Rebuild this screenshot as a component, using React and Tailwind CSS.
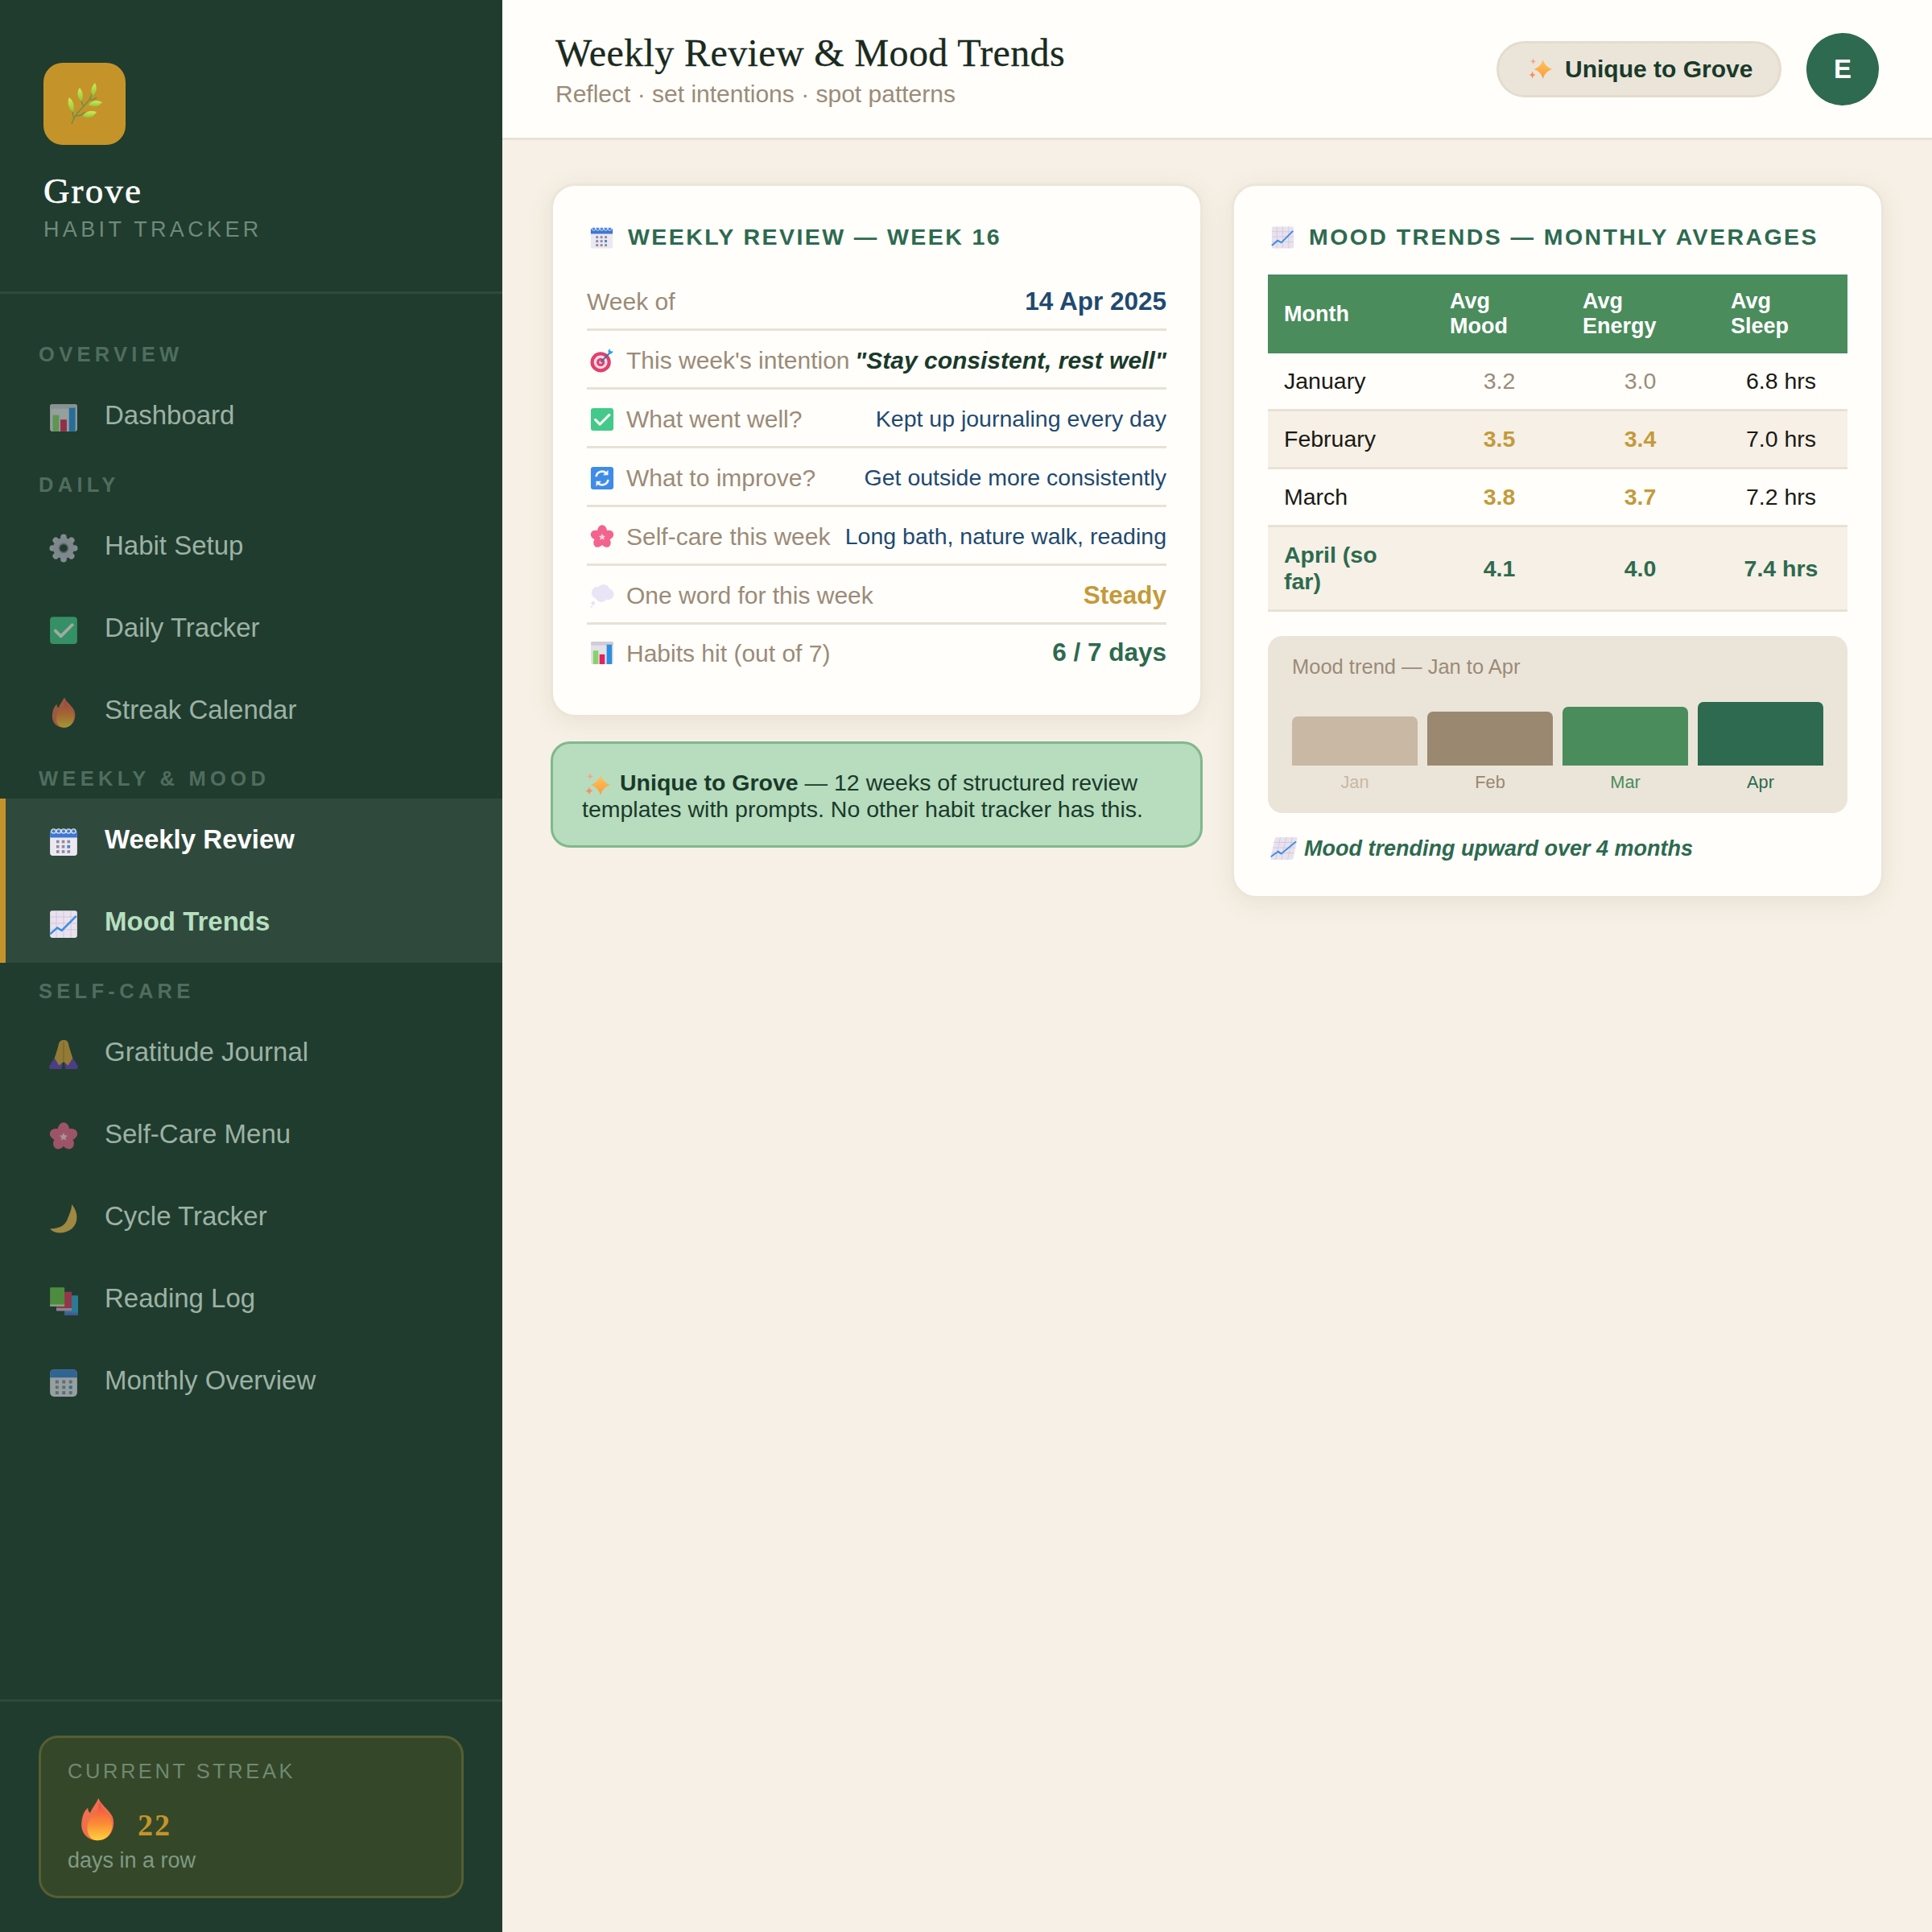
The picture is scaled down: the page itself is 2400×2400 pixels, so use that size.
import * as React from "react";

// Emoji drawings, the machine has no colour emoji font
const BarsIcon = ({ className }) => (
  <svg viewBox="0 0 32 32" className={className}>
    <rect x="1" y="1" width="30" height="30" rx="2.5" fill="#e4e2e8" />
    <rect x="1" y="1" width="30" height="5" rx="2" fill="#cfccd6" />
    <rect x="4" y="13" width="7" height="18" fill="#86d36b" />
    <rect x="12.5" y="18" width="7" height="13" fill="#e0245e" />
    <rect x="22" y="5" width="7" height="26" fill="#2a8fe0" />
  </svg>
);
const GearIcon = ({ className }) => (
  <svg viewBox="0 0 32 32" className={className}>
    {[0, 45, 90, 135, 180, 225, 270, 315].map((a) => (
      <circle key={a} cx="16" cy="3.8" r="3.4" fill="#c3c0cf" transform={`rotate(${a} 16 16)`} />
    ))}
    <circle cx="16" cy="16" r="8" fill="none" stroke="#bdb9ca" strokeWidth="7" />
    <circle cx="16" cy="16" r="5" fill="none" stroke="#8b8799" strokeWidth="1.4" />
  </svg>
);
const CheckIcon = ({ className }) => (
  <svg viewBox="0 0 32 32" className={className}>
    <rect x="1" y="1" width="30" height="30" rx="3.5" fill="#43c98a" />
    <path d="M7 16.5l6 6L25.5 10" fill="none" stroke="#f4f6f2" strokeWidth="3.4" strokeLinecap="round" strokeLinejoin="round" />
  </svg>
);
const FlameIcon = ({ className, id = "flame" }) => (
  <svg viewBox="0 0 32 40" className={className}>
    <defs>
      <linearGradient id={id} x1="0" y1="0" x2="0" y2="1">
        <stop offset="0" stopColor="#f0484a" />
        <stop offset="0.55" stopColor="#fb8a35" />
        <stop offset="1" stopColor="#fdd23c" />
      </linearGradient>
    </defs>
    <path d="M17 0c2 6 9 10 13 17 4 9-1 23-14 23C5 40 0 31 1 23 2 16 3 13 7 9c0 3 1 4 2 5 2-5 6-9 8-14z" fill="#ef6f4e" />
    <path d="M18 4c2 6 8 10 11 17 3 9-2 19-13 19C8 40 5 31 7 24c1-5 4-8 6-11 1 2 1 3 2 4 1-5 2-9 3-13z" fill={`url(#${id})`} />
  </svg>
);
const SpiralCalIcon = ({ className }) => (
  <svg viewBox="0 0 32 32" className={className}>
    <rect x="1" y="3" width="30" height="28" rx="3" fill="#ece8f2" />
    <path d="M1 6a3 3 0 0 1 3-3h24a3 3 0 0 1 3 3v5H1z" fill="#3f76d1" />
    {[5, 10.5, 16, 21.5, 27].map((x) => (
      <circle key={x} cx={x} cy="4" r="2.4" fill="none" stroke="#d6e6f8" strokeWidth="1.1" />
    ))}
    {[8, 14, 20].map((x) =>
      [14, 19.5, 25].map((y) => <rect key={`${x}-${y}`} x={x} y={y} width="3.2" height="3.2" fill="#8d8a9c" />)
    )}
    <rect x="20" y="19.5" width="3.2" height="3.2" fill="#3f8ad1" />
  </svg>
);
const TrendIcon = ({ className }) => (
  <svg viewBox="0 0 32 32" className={className}>
    <rect x="1" y="1" width="30" height="30" rx="2.5" fill="#e9e2ee" />
    <path d="M1 8h30M1 15h30M1 22h30M8 1v30M16 1v30M24 1v30" stroke="#cdc4d8" strokeWidth="0.8" />
    <path d="M1 27l8-7 5 3L30 7" fill="none" stroke="#3b8ee0" strokeWidth="2.2" />
  </svg>
);
const PrayIcon = ({ className }) => (
  <svg viewBox="0 0 32 32" className={className}>
    <path d="M7 18L0 29l1 3h13l1-6zM25 18l7 11-1 3H18l-1-6z" fill="#6a3fc0" />
    <path d="M16 0c-4 0-5.500 3-6 7L6 20l5 8 5-4 5 4 5-8-4-13c-.5-4-2-7-5-7z" fill="#e0a63a" />
    <path d="M16 2v21" stroke="#b07e22" strokeWidth="1" />
  </svg>
);
const BlossomIcon = ({ className }) => (
  <svg viewBox="0 0 32 32" className={className}>
    {[0, 72, 144, 216, 288].map((a) => (
      <ellipse key={a} cx="16" cy="8.5" rx="6.4" ry="8.2" fill="#f2648d" transform={`rotate(${a} 16 16)`} />
    ))}
    <path d="M16 11.5l1.3 3 3.2.3-2.4 2.1.7 3.2-2.8-1.700-2.8 1.700.7-3.200-2.400-2.100 3.200-.3z" fill="#fbd5df" />
  </svg>
);
const MoonIcon = ({ className }) => (
  <svg viewBox="0 0 32 32" className={className}>
    <path d="M25 0c7 8 8 20 0 27C17 33 6 33 1 27c9 0 16-3 19-10 3-7 5-12 5-17z" fill="#f0bd4f" />
  </svg>
);
const BooksIcon = ({ className }) => (
  <svg viewBox="0 0 32 32" className={className}>
    <rect x="17" y="10" width="15" height="22" rx="1" fill="#2fa5dc" />
    <path d="M17 29h15v3H17z" fill="#5b6fd6" />
    <rect x="8" y="6" width="17" height="21" rx="1" fill="#e0335e" />
    <path d="M8 24h17v3H8z" fill="#c9b6d8" />
    <rect x="1" y="1" width="16" height="21" rx="1" fill="#6cc24a" />
    <path d="M1 20h16v2H1z" fill="#d5e8c6" />
  </svg>
);
const MonthIcon = ({ className }) => (
  <svg viewBox="0 0 32 32" className={className}>
    <rect x="1" y="1" width="30" height="30" rx="4.5" fill="#e6e3ee" />
    <path d="M1 10V5.5A4.5 4.5 0 0 1 5.500 1h21A4.500 4.500 0 0 1 31 5.500V10z" fill="#3b7fd6" />
    {[7, 14.5, 22].map((x) =>
      [13, 19, 25].map((y) => <rect key={`${x}-${y}`} x={x} y={y} width="3.500" height="3.500" fill={x === 22 && y === 19 ? "#3b8ee0" : "#8f8ca0"} />)
    )}
  </svg>
);
const TargetIcon = ({ className }) => (
  <svg viewBox="0 0 32 32" className={className}>
    <circle cx="14" cy="18" r="13.500" fill="#e0406f" />
    <circle cx="14" cy="18" r="9" fill="#f6dbe4" />
    <circle cx="14" cy="18" r="5.500" fill="#e0406f" />
    <circle cx="14" cy="18" r="2" fill="#f6dbe4" />
    <path d="M14 18L28 4" stroke="#3c6fa8" strokeWidth="2" />
    <path d="M24 3l2-3 1 3.500 4 .5-3 3-3.500.5z" fill="#2f9fe6" />
  </svg>
);
const RepeatIcon = ({ className }) => (
  <svg viewBox="0 0 32 32" className={className}>
    <rect x="1" y="1" width="30" height="30" rx="3.500" fill="#3f8be8" />
    <path d="M8 14a8 8 0 0 1 14-4M24 18a8 8 0 0 1-14 4" fill="none" stroke="#f2f6fc" strokeWidth="2.800" />
    <path d="M24 5v7h-7zM8 27v-7h7z" fill="#f2f6fc" />
  </svg>
);
const ThoughtIcon = ({ className }) => (
  <svg viewBox="0 0 32 32" className={className}>
    <g fill="#e9e4f6">
      <circle cx="10" cy="12" r="8" />
      <circle cx="18" cy="9" r="8" />
      <circle cx="24" cy="14" r="7.500" />
      <circle cx="15" cy="17" r="7.500" />
      <circle cx="4" cy="26" r="2.500" />
      <circle cx="2" cy="30.500" r="1.300" />
    </g>
  </svg>
);
const SparkleIcon = ({ className, id = "spark" }) => (
  <svg viewBox="0 0 32 32" className={className}>
    <defs>
      <linearGradient id={id} x1="0" y1="0" x2="0" y2="1">
        <stop offset="0" stopColor="#ffc65c" />
        <stop offset="1" stopColor="#f99a3d" />
      </linearGradient>
    </defs>
    <path d="M20 3c1.500 6 5 10.500 12 13-7 2.500-10.500 7-12 13-1.500-6-5-10.500-12-13 7-2.500 10.500-7 12-13z" fill={`url(#${id})`} />
    <path d="M7 1c.4 3 1.300 4 4 4.500C8.300 6 7.400 7 7 10c-.4-3-1.300-4-4-4.500C5.700 5 6.600 4 7 1z" fill="#f7a48a" />
    <path d="M6 18c.5 3.500 1.700 4.800 5 5.500-3.300.7-4.500 2-5 5.500-.5-3.500-1.700-4.800-5-5.500 3.300-.7 4.500-2 5-5.500z" fill="#f88f62" />
  </svg>
);
const HerbIcon = ({ className }) => (
  <svg viewBox="0 0 44 52" className={className}>
    <defs>
      <linearGradient id="leaf" x1="0" y1="0" x2="0" y2="1">
        <stop offset="0" stopColor="#d3ea5a" />
        <stop offset="1" stopColor="#8cc63a" />
      </linearGradient>
    </defs>
    <path d="M6 51c3-10 10-17 16-23 5-5 9-11 10-18M12 41c4 0 8-2 10-5M21 29c-2-4-4-7-4-11M29 21c3 0 6-1 8-3M9 44c-1-3-2-5-2-8" fill="none" stroke="#6d8f46" strokeWidth="1.500" />
    <path d="M35 0c3 6 2 12-3 16-3-5-2-11 3-16z" fill="url(#leaf)" />
    <path d="M16 6c4 5 5 11 2 17-5-5-6-12-2-17z" fill="url(#leaf)" />
    <path d="M3 18c5 4 7 11 5 18-6-3-8-12-5-18z" fill="url(#leaf)" />
    <path d="M44 24c-6-3-12-3-17 3 5 4 13 3 17-3z" fill="url(#leaf)" />
    <path d="M37 36c-7-2-13-1-17 5 6 4 13 2 17-5z" fill="url(#leaf)" />
  </svg>
);

const navSections = [
  { label: "OVERVIEW", items: [{ name: "Dashboard", Icon: BarsIcon }] },
  {
    label: "DAILY",
    items: [
      { name: "Habit Setup", Icon: GearIcon },
      { name: "Daily Tracker", Icon: CheckIcon },
      { name: "Streak Calendar", Icon: FlameIcon, small: true },
    ],
  },
  {
    label: "WEEKLY & MOOD",
    items: [
      { name: "Weekly Review", Icon: SpiralCalIcon, active: "text-white" },
      { name: "Mood Trends", Icon: TrendIcon, active: "text-[#b7dfc0]" },
    ],
  },
  {
    label: "SELF-CARE",
    items: [
      { name: "Gratitude Journal", Icon: PrayIcon },
      { name: "Self-Care Menu", Icon: BlossomIcon },
      { name: "Cycle Tracker", Icon: MoonIcon },
      { name: "Reading Log", Icon: BooksIcon },
      { name: "Monthly Overview", Icon: MonthIcon },
    ],
  },
];

const reviewRows = [
  { label: "Week of", value: "14 Apr 2025", valueClass: "text-[31.5px] font-bold text-[#1f4a70]" },
  { label: "This week's intention", Icon: TargetIcon, value: '"Stay consistent, rest well"', valueClass: "text-[30px] font-bold italic text-[#1a3a2a]" },
  { label: "What went well?", Icon: CheckIcon, value: "Kept up journaling every day", valueClass: "text-[28.5px] text-[#1f4a70]" },
  { label: "What to improve?", Icon: RepeatIcon, value: "Get outside more consistently", valueClass: "text-[28.5px] text-[#1f4a70]" },
  { label: "Self-care this week", Icon: BlossomIcon, value: "Long bath, nature walk, reading", valueClass: "text-[28.5px] text-[#1f4a70]" },
  { label: "One word for this week", Icon: ThoughtIcon, value: "Steady", valueClass: "text-[31.5px] font-bold text-[#c49a3a]" },
  { label: "Habits hit (out of 7)", Icon: BarsIcon, value: "6 / 7 days", valueClass: "text-[31.5px] font-bold text-[#2d6a4f]" },
];

const moodRows = [
  { month: "January", mood: "3.2", energy: "3.0", sleep: "6.8 hrs", tone: "text-[#9b8b78]" },
  { month: "February", mood: "3.5", energy: "3.4", sleep: "7.0 hrs", tone: "font-bold text-[#c49a3a]" },
  { month: "March", mood: "3.8", energy: "3.7", sleep: "7.2 hrs", tone: "font-bold text-[#c49a3a]" },
  { month: "April (so far)", mood: "4.1", energy: "4.0", sleep: "7.4 hrs", tone: "font-bold text-[#2d6a4f]", strong: true },
];

const bars = [
  { month: "Jan", barClass: "h-[61px] bg-[#c8b8a4]", labelClass: "text-[#c8b8a4]" },
  { month: "Feb", barClass: "h-[67px] bg-[#9b8870]", labelClass: "text-[#9b8870]" },
  { month: "Mar", barClass: "h-[73px] bg-[#4a8c5c]", labelClass: "text-[#4a8c5c]" },
  { month: "Apr", barClass: "h-[79px] bg-[#2d6a4f]", labelClass: "text-[#2d6a4f]" },
];

const Sidebar = () => (
  <aside className="flex h-[2400px] w-[624px] shrink-0 flex-col bg-[#203c2e]">
    <div className="h-[365px] border-b-[3px] border-[#2f4a3d] pl-[54px] pt-[78px]">
      <div className="flex h-[102px] w-[102px] items-center justify-center rounded-[24px] bg-[#c4942a]">
        <HerbIcon className="h-[52px] w-[44px]" />
      </div>
      <div className="mt-[30px] font-['Liberation_Serif',serif] text-[45px] leading-[54px] tracking-[2.1px] text-white [-webkit-text-stroke:0.6px_white]">Grove</div>
      <div className="mt-[6px] text-[27px] leading-[31px] tracking-[4.35px] text-[#6f8a7b]">HABIT TRACKER</div>
    </div>
    <nav className="flex-1 pt-[40.5px]">
      {navSections.map((section) => (
        <div key={section.label}>
          <div className="mb-[10px] mt-[20.5px] pl-[48px] text-[25.5px] font-bold leading-[29px] tracking-[5.3px] text-[#4f6d5e]">
            {section.label}
          </div>
          {section.items.map(({ name, Icon, active, small }) => (
            <div
              key={name}
              className={`flex h-[102px] items-center border-l-[7px] pl-[54px] ${active ? "border-[#c4942a] bg-[#2f4a3d]" : "border-transparent"}`}
            >
              <span className={`mr-[33px] mt-[6px] flex w-[36px] justify-center ${active ? "" : "opacity-60"}`}>
                <Icon className={small ? "h-[38px] w-[30px]" : "h-[36px] w-[36px]"} id="navFlame" />
              </span>
              <span className={`text-[33px] ${active ? `font-bold ${active}` : "text-[#9cb2a5]"}`}>{name}</span>
            </div>
          ))}
        </div>
      ))}
    </nav>
    <div className="border-t-[3px] border-[#2f4a3d] px-[48px] pb-[42px] pt-[42px]">
      <div className="h-[202px] rounded-[24px] border-[3px] border-[#565f33] bg-[#354729] pl-[33px] pt-[27px]">
        <div className="text-[25.5px] leading-[29px] tracking-[3.55px] text-[#6f8a72]">CURRENT STREAK</div>
        <div className="mt-[18px] flex h-[54px] items-center">
          <FlameIcon className="ml-[16px] mr-[29px] h-[54px] w-[42px]" id="bigFlame" />
          <span className="mt-[14px] font-['Liberation_Serif',serif] text-[38px] font-bold leading-[36px] tracking-[2px] text-[#c4942a]">22</span>
        </div>
        <div className="mt-[9px] text-[27px] leading-[31px] text-[#7f9a85]">days in a row</div>
      </div>
    </div>
  </aside>
);

const Header = () => (
  <header className="flex h-[174px] items-center justify-between border-b-[3px] border-[#e8e2d6] bg-[#fffefa] pl-[66px] pr-[66px]">
    <div>
      <h1 className="mt-[1px] font-['Liberation_Serif',serif] text-[48px] leading-[58px] tracking-[0.38px] text-[#1a2a20] [-webkit-text-stroke:0.3px_#1a2a20]">Weekly Review &amp; Mood Trends</h1>
      <div className="mt-[4px] text-[30px] leading-[36px] text-[#9b8b78]">Reflect · set intentions · spot patterns</div>
    </div>
    <div className="flex items-center gap-[31px]">
      <div className="flex h-[70px] w-[354px] items-center rounded-full border-[3px] border-[#e3dccf] bg-[#ebe5d9] pl-[36px]">
        <SparkleIcon className="mr-[16px] h-[30px] w-[30px]" id="pillSpark" />
        <span className="text-[30px] font-bold text-[#1a3a2a]">Unique to Grove</span>
      </div>
      <div className="flex h-[90px] w-[90px] items-center justify-center rounded-full bg-[#2d6a4f] text-[33px] font-bold text-white">E</div>
    </div>
  </header>
);

const CardTitle = ({ Icon, children, className }) => (
  <div className={`flex h-[43px] items-center text-[28.5px] font-bold tracking-[2.41px] text-[#2d6a4f] ${className}`}>
    <Icon className="ml-[4px] mr-[18px] h-[30px] w-[29px]" />
    {children}
  </div>
);

const Card = ({ children, className }) => (
  <section className={`rounded-[30px] border-[3px] border-[#ece6da] bg-[#fffefa] px-[42px] pt-[42px] shadow-[0_6px_30px_rgba(120,100,60,0.1)] ${className}`}>
    {children}
  </section>
);

const WeeklyReview = () => (
  <Card className="h-[663px]">
    <CardTitle Icon={SpiralCalIcon} className="mb-[22px]">WEEKLY REVIEW — WEEK 16</CardTitle>
    {reviewRows.map(({ label, Icon, value, valueClass }, i) => (
      <div
        key={label}
        className={`flex h-[73px] items-center justify-between ${i < reviewRows.length - 1 ? "border-b-[3px] border-[#e8e2d6] pt-[3px]" : "pb-[3px]"}`}
      >
        <div className="flex items-center text-[30px] text-[#9b8b78]">
          {Icon && <Icon className="ml-[4px] mr-[15px] h-[30px] w-[30px]" />}
          {label}
        </div>
        <div className={valueClass}>{value}</div>
      </div>
    ))}
  </Card>
);

const Callout = () => (
  <div className="mt-[30px] rounded-[24px] border-[3px] border-[#7fb98c] bg-[#b7dcbe] px-[36px] pb-[28px] pt-[32px] text-[28.500px] leading-[33px] text-[#1a3a2a]">
    <SparkleIcon className="mb-[-2px] ml-[3px] mr-[12px] inline-block h-[32px] w-[32px]" id="noteSpark" />
    <b>Unique to Grove</b> — 12 weeks of structured review templates with prompts. No other habit tracker has this.
  </div>
);

const MoodTrends = () => (
  <Card className="h-[888px]">
    <CardTitle Icon={TrendIcon} className="mb-[25px]">MOOD TRENDS — MONTHLY AVERAGES</CardTitle>
    <table className="w-[720px] table-fixed border-collapse leading-[normal]">
      <colgroup>
        <col className="w-[205px]" />
        <col className="w-[165px]" />
        <col className="w-[185px]" />
        <col className="w-[165px]" />
      </colgroup>
      <thead>
        <tr className="bg-[#4a8c5c] text-left text-[27px] font-bold text-white">
          <th className="py-[18px] pl-[20px] pr-[21px]">Month</th>
          <th className="px-[21px] py-[18px]">Avg Mood</th>
          <th className="px-[21px] py-[18px]">Avg Energy</th>
          <th className="py-[18px] pl-[20px] pr-[21px]">Avg Sleep</th>
        </tr>
      </thead>
      <tbody>
        {moodRows.map((row, i) => (
          <tr key={row.month} className={`border-b-[3px] border-[#e8e2d6] text-[28.5px] ${i % 2 ? "bg-[#f6f0e6]" : ""}`}>
            <td className={`py-[18px] pl-[20px] pr-[21px] ${row.strong ? "font-bold text-[#2d6a4f]" : "text-[#1a1a14]"}`}>{row.month}</td>
            <td className={`px-[21px] py-[18px] text-center ${row.tone}`}>{row.mood}</td>
            <td className={`px-[21px] py-[18px] text-center ${row.tone}`}>{row.energy}</td>
            <td className={`px-[21px] py-[18px] text-center ${row.strong ? "font-bold text-[#2d6a4f]" : "text-[#1a1a14]"}`}>{row.sleep}</td>
          </tr>
        ))}
      </tbody>
    </table>
    <div className="mt-[30px] h-[220px] rounded-[18px] bg-[#ebe5d9] px-[30px] pt-[24px]">
      <div className="text-[25.5px] leading-[29px] text-[#9b8b78]">Mood trend — Jan to Apr</div>
      <div className="mt-[29px] flex gap-[12px]">
        {bars.map(({ month, barClass, labelClass }) => (
          <div key={month} className="flex h-[113px] flex-1 flex-col justify-end">
            <div className={`rounded-t-[7px] ${barClass}`} />
            <div className={`mt-[8px] h-[26px] text-center text-[21.750px] leading-[25px] ${labelClass}`}>{month}</div>
          </div>
        ))}
      </div>
    </div>
    <div className="mt-[28px] flex items-center text-[27px] font-bold italic leading-[32px] text-[#2d6a4f]">
      <TrendIcon className="ml-[4px] mr-[9px] h-[30px] w-[32px] -skew-x-12" />
      Mood trending upward over 4 months
    </div>
  </Card>
);

export default function App() {
  return (
    <div className="flex h-[2400px] w-[2400px] overflow-hidden bg-[#f6f0e6] font-['Liberation_Sans',Arial,sans-serif]">
      <Sidebar />
      <main className="flex-1">
        <Header />
        <div className="grid grid-cols-2 items-start gap-[36px] pl-[60px] pr-[60px] pt-[54px]">
          <div>
            <WeeklyReview />
            <Callout />
          </div>
          <MoodTrends />
        </div>
      </main>
    </div>
  );
}
